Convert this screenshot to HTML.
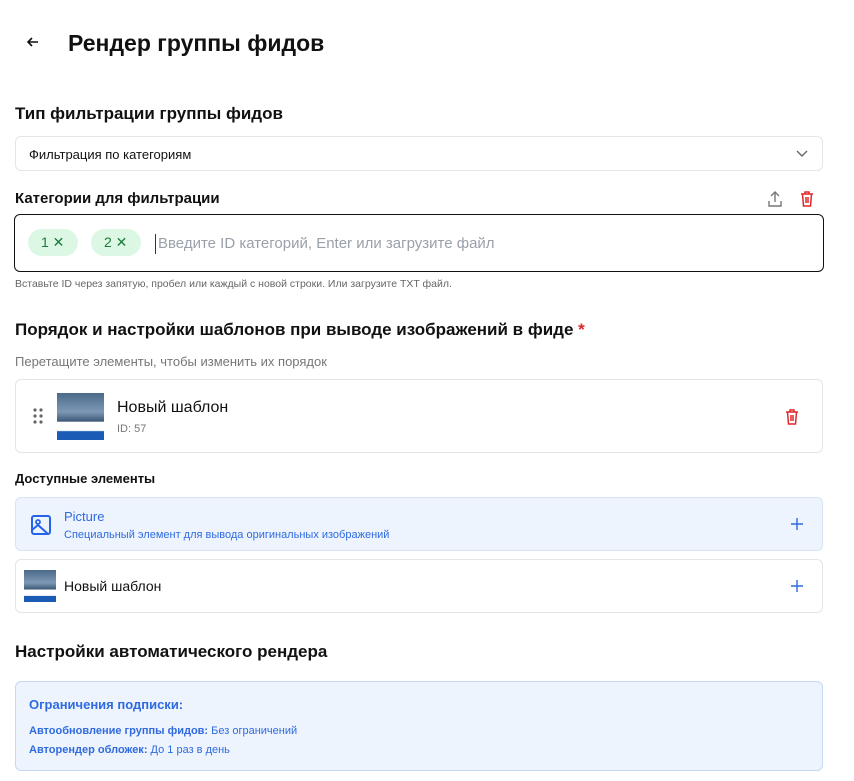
<!DOCTYPE html>
<html><head><meta charset="utf-8"><style>
*{box-sizing:border-box;margin:0;padding:0}
body{width:854px;height:781px;background:#fff;font-family:"Liberation Sans",sans-serif;color:#111;position:relative;overflow:hidden}
.a{position:absolute}
.box{position:absolute;left:15px;width:808px;border:1px solid #e3e5e8;border-radius:6px;background:#fff}
.thumb{position:absolute;background:linear-gradient(#4a6a8a 0,#7d98b5 40%,#3d5a78 60%,#fff 62%,#fff 80%,#1a5bb5 82%)}
</style></head><body>
<svg class="a" style="left:25px;top:34px" width="16" height="16" viewBox="0 0 16 16"><path d="M13 8H3M7 4L3 8l4 4" stroke="#111" stroke-width="1.6" fill="none"/></svg>
<div class="a" style="left:68px;top:30px;font-size:23px;font-weight:bold">Рендер группы фидов</div>
<div class="a" style="left:15px;top:104px;font-size:17px;font-weight:bold">Тип фильтрации группы фидов</div>
<div class="box" style="top:136px;height:35px"><div class="a" style="left:13px;top:10px;font-size:13px">Фильтрация по категориям</div>
<svg class="a" style="left:780px;top:12px" width="12" height="10"><path d="M1 2l5 5 5-5" stroke="#666" stroke-width="1.4" fill="none"/></svg></div>
<div class="a" style="left:15px;top:190px;font-size:15px;font-weight:bold">Категории для фильтрации</div>
<svg class="a" style="left:767px;top:190px" width="16" height="18"><path d="M8 12V2M4 6l4-4 4 4M2 11v5h12v-5" stroke="#777" stroke-width="1.4" fill="none"/></svg>
<svg class="a" style="left:799px;top:190px" width="16" height="18"><path d="M2 4h12M6 4V2h4v2M3.5 4l1 12h7l1-12M7 7v6M9 7v6" stroke="#e0262a" stroke-width="1.5" fill="none"/></svg>
<div class="a" style="left:14px;top:214px;width:810px;height:58px;border:1px solid #111;border-radius:6px"></div>
<div class="a" style="left:28px;top:229px;width:50px;height:27px;border-radius:14px;background:#dcf8e4;color:#1a7a3a;font-size:14px;line-height:27px;padding-left:13px">1 ✕</div>
<div class="a" style="left:91px;top:229px;width:50px;height:27px;border-radius:14px;background:#dcf8e4;color:#1a7a3a;font-size:14px;line-height:27px;padding-left:13px">2 ✕</div>
<div class="a" style="left:155px;top:234px;width:1px;height:20px;background:#333"></div>
<div class="a" style="left:158px;top:235px;font-size:15px;color:#9aa0aa">Введите ID категорий, Enter или загрузите файл</div>
<div class="a" style="left:15px;top:278px;font-size:10.5px;color:#666">Вставьте ID через запятую, пробел или каждый с новой строки. Или загрузите TXT файл.</div>
<div class="a" style="left:15px;top:320px;font-size:17px;font-weight:bold">Порядок и настройки шаблонов при выводе изображений в фиде <span style="color:#e0262a">*</span></div>
<div class="a" style="left:15px;top:354px;font-size:13px;color:#777">Перетащите элементы, чтобы изменить их порядок</div>
<div class="box" style="top:379px;height:74px">
<svg class="a" style="left:17px;top:28px" width="10" height="16"><g fill="#666"><circle cx="2" cy="2" r="1.6"/><circle cx="8" cy="2" r="1.6"/><circle cx="2" cy="8" r="1.6"/><circle cx="8" cy="8" r="1.6"/><circle cx="2" cy="14" r="1.6"/><circle cx="8" cy="14" r="1.6"/></g></svg>
<div class="thumb" style="left:41px;top:13px;width:47px;height:47px"></div>
<div class="a" style="left:101px;top:19px;font-size:16px">Новый шаблон</div>
<div class="a" style="left:101px;top:43px;font-size:11px;color:#777">ID: 57</div>
<svg class="a" style="left:768px;top:28px" width="16" height="18"><path d="M2 4h12M6 4V2h4v2M3.5 4l1 12h7l1-12M7 7v6M9 7v6" stroke="#e0262a" stroke-width="1.5" fill="none"/></svg></div>
<div class="a" style="left:15px;top:471px;font-size:13px;font-weight:bold">Доступные элементы</div>
<div class="box" style="top:497px;height:54px;background:#edf4fe;border-color:#d8e4f5">
<svg class="a" style="left:14px;top:16px" width="22" height="22" viewBox="0 0 22 22"><rect x="2" y="2" width="18" height="18" rx="2" stroke="#2563eb" stroke-width="2" fill="none"/><circle cx="8" cy="8" r="2" stroke="#2563eb" stroke-width="1.8" fill="none"/><path d="M2 16l6-5 10 9" stroke="#2563eb" stroke-width="2" fill="none"/></svg>
<div class="a" style="left:48px;top:11px;font-size:13px;color:#2f6ae0">Picture</div>
<div class="a" style="left:48px;top:31px;font-size:11px;color:#2f6ae0">Специальный элемент для вывода оригинальных изображений</div>
<svg class="a" style="left:775px;top:20px" width="12" height="12"><path d="M6 0v12M0 6h12" stroke="#2f6ae0" stroke-width="1.4"/></svg></div>
<div class="box" style="top:559px;height:54px">
<div class="thumb" style="left:8px;top:10px;width:32px;height:32px"></div>
<div class="a" style="left:48px;top:18px;font-size:14px">Новый шаблон</div>
<svg class="a" style="left:775px;top:20px" width="12" height="12"><path d="M6 0v12M0 6h12" stroke="#2f6ae0" stroke-width="1.4"/></svg></div>
<div class="a" style="left:15px;top:642px;font-size:17px;font-weight:bold">Настройки автоматического рендера</div>
<div class="box" style="top:681px;height:90px;background:#edf4fe;border-color:#c5d8f5">
<div class="a" style="left:13px;top:15px;font-size:13px;font-weight:bold;color:#2f6ae0">Ограничения подписки:</div>
<div class="a" style="left:13px;top:43px;font-size:11px;color:#2f6ae0"><b>Автообновление группы фидов:</b> Без ограничений</div>
<div class="a" style="left:13px;top:62px;font-size:11px;color:#2f6ae0"><b>Авторендер обложек:</b> До 1 раз в день</div></div>
</body></html>
